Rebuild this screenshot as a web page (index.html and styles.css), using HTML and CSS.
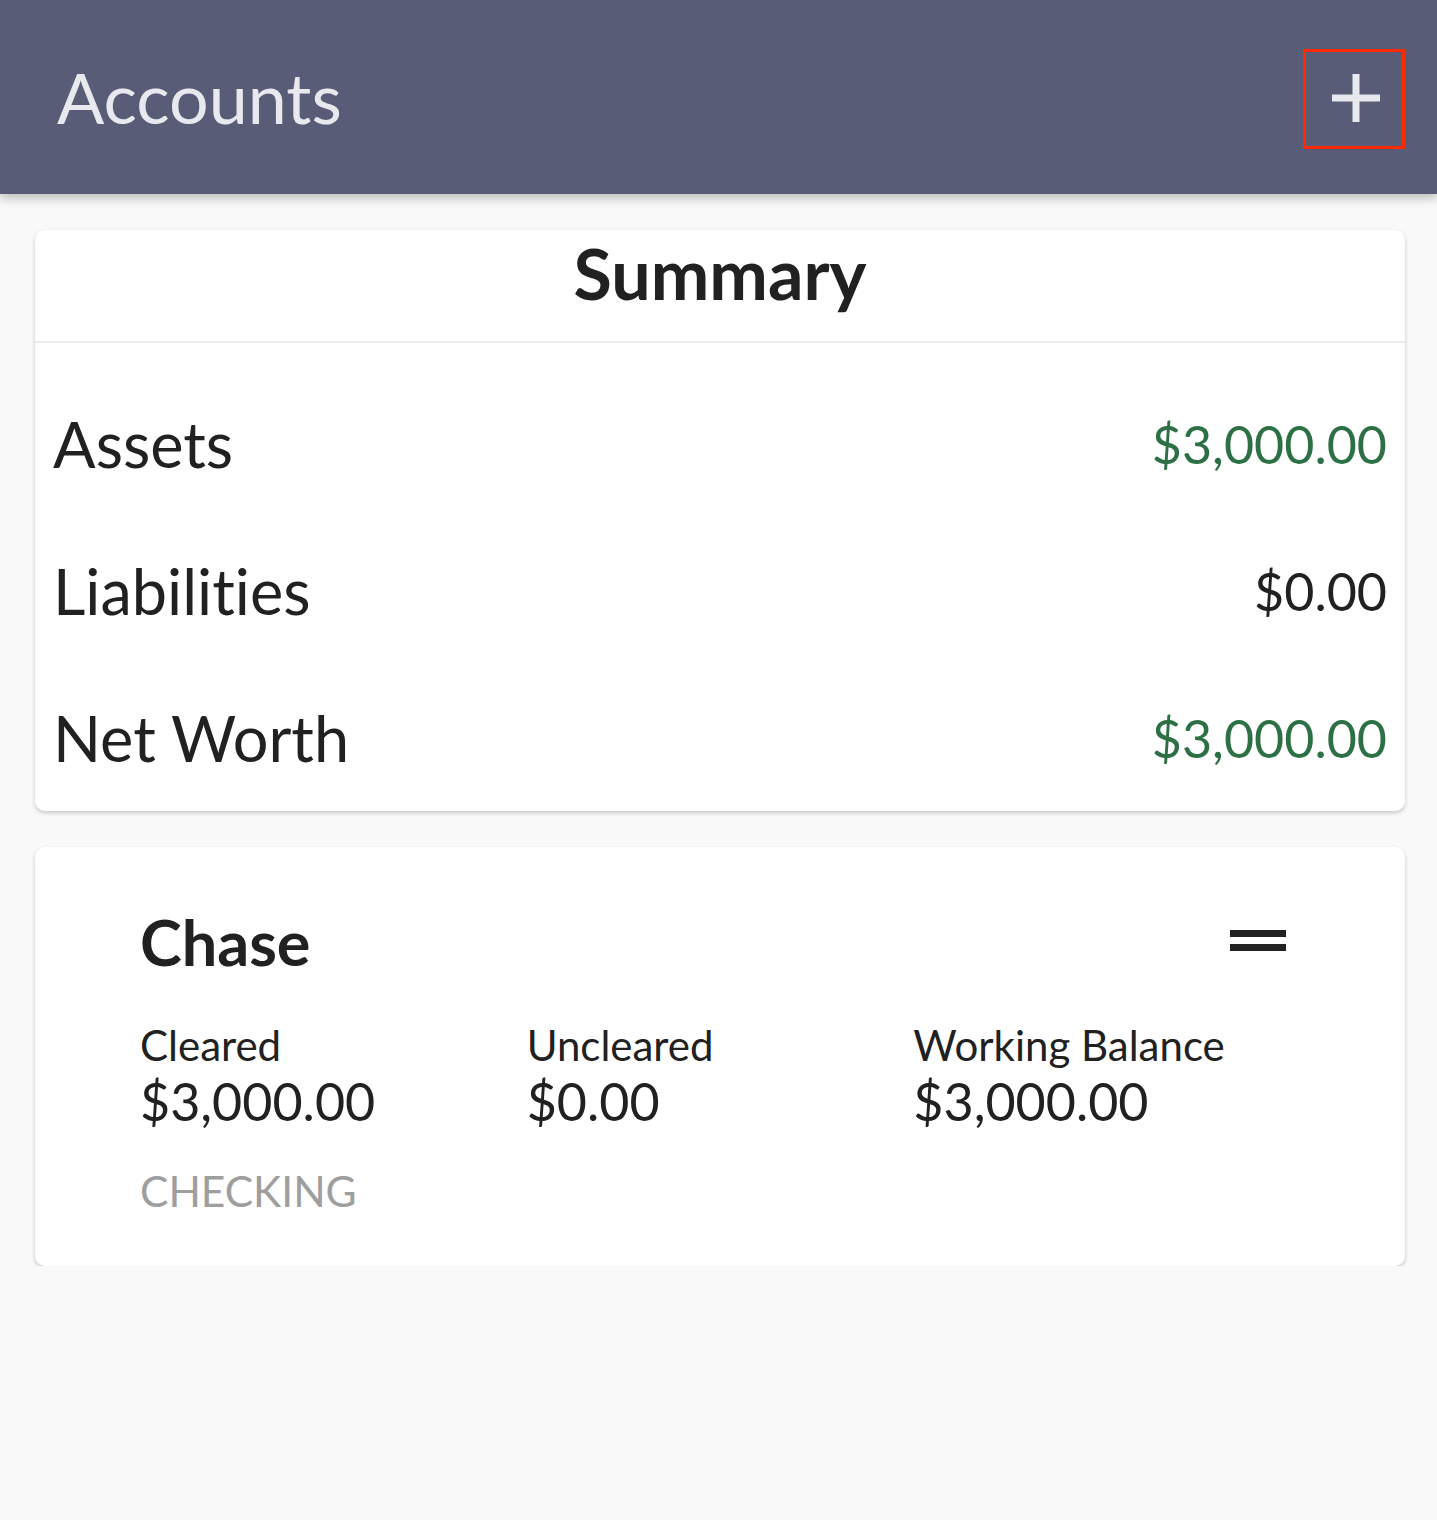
FILE: index.html
```html
<!DOCTYPE html>
<html lang="en">

<head>
    <meta charset="UTF-8">
    <meta name="viewport" content="width=device-width, initial-scale=1.0">
    <title>Accounts</title>

    <link rel="stylesheet" href="styles.css">
</head>

<body>
    <header class="topbar">
        <h1 class="topbar-title">Accounts</h1>
        <button class="add-btn" type="button" aria-label="Add account">
            <svg width="52" height="52" viewBox="0 0 52 52">
                <path d="M26 2 V50 M2 26 H50" stroke="#e8e9ee" stroke-width="7" fill="none" />
            </svg>
        </button>
    </header>

    <main class="content">
        <section class="card summary">
            <h2 class="summary-title">Summary</h2>
            <div class="summary-rows">
                <div class="summary-row">
                    <span class="row-label">Assets</span>
                    <span class="row-amount positive">$3,000.00</span>
                </div>
                <div class="summary-row">
                    <span class="row-label">Liabilities</span>
                    <span class="row-amount">$0.00</span>
                </div>
                <div class="summary-row">
                    <span class="row-label">Net Worth</span>
                    <span class="row-amount positive">$3,000.00</span>
                </div>
            </div>
        </section>

        <section class="card account">
            <div class="account-head">
                <h3 class="account-name">Chase</h3>
                <span class="drag-handle"><i></i><i></i></span>
            </div>
            <div class="balances">
                <div class="balance">
                    <span class="balance-label">Cleared</span>
                    <span class="balance-amount">$3,000.00</span>
                </div>
                <div class="balance">
                    <span class="balance-label">Uncleared</span>
                    <span class="balance-amount">$0.00</span>
                </div>
                <div class="balance">
                    <span class="balance-label">Working Balance</span>
                    <span class="balance-amount">$3,000.00</span>
                </div>
            </div>
            <div class="account-type">CHECKING</div>
        </section>
    </main>
</body>

</html>
```

FILE: styles.css
```css
body {
    margin: 0;
    background-color: #f9f9f9;
    font-family: Lato, "Open Sans", sans-serif;
    font-variant-ligatures: none;
    color: #212121;
}

.topbar {
    height: 194px;
    background-color: #585c76;
    display: flex;
    align-items: center;
    justify-content: space-between;
    padding: 0 32px 0 57px;
    box-shadow: 0 4px 10px rgba(0, 0, 0, 0.25);
    position: relative;
}

.topbar-title {
    margin: 0;
    font-weight: 400;
    font-size: 70px;
    color: #e8e9ee;
    margin-top: -1px;
}

.add-btn {
    width: 102px;
    height: 100px;
    border: 3px solid #ff2a00;
    background: none;
    display: flex;
    align-items: center;
    justify-content: center;
    padding: 0 0 2px 3px;
    margin-top: 4px;
}

.content {
    padding: 36px 32px 0 35px;
}

.card {
    background-color: #fff;
    border-radius: 10px;
    box-shadow: 0 2px 4px rgba(0, 0, 0, 0.2);
}

.summary-title {
    margin: 0;
    height: 111px;
    border-bottom: 2px solid #eeeeee;
    text-align: center;
    font-weight: 700;
    font-size: 70px;
    line-height: 87px;
}

.summary-rows {
    padding: 27px 18px 0 18px;
}

.summary-row {
    height: 147px;
    display: flex;
    align-items: center;
    justify-content: space-between;
}

.row-label {
    font-size: 63px;
}

.row-amount {
    font-size: 52px;
}

.positive {
    color: #2e7045;
}

.account {
    margin-top: 36px;
    height: 419px;
    padding: 54px 105px 0;
    box-sizing: border-box;
}

.account-head {
    display: flex;
    justify-content: space-between;
    align-items: center;
    height: 80px;
}

.account-name {
    margin: 0;
    font-weight: 700;
    font-size: 63px;
}

.drag-handle {
    display: flex;
    flex-direction: column;
    gap: 7px;
    margin: 0 14px 2px 0;
}

.drag-handle i {
    display: block;
    width: 56px;
    height: 7px;
    background-color: #212121;
}

.balances {
    display: grid;
    grid-template-columns: repeat(3, 1fr);
    margin-top: 38px;
}

.balance {
    display: flex;
    flex-direction: column;
}

.balance-label {
    font-size: 42px;
    line-height: 52px;
}

.balance-amount {
    font-size: 52px;
    line-height: 60px;
}

.account-type {
    margin-top: 34px;
    font-size: 42.5px;
    color: #9e9e9e;
}
```
